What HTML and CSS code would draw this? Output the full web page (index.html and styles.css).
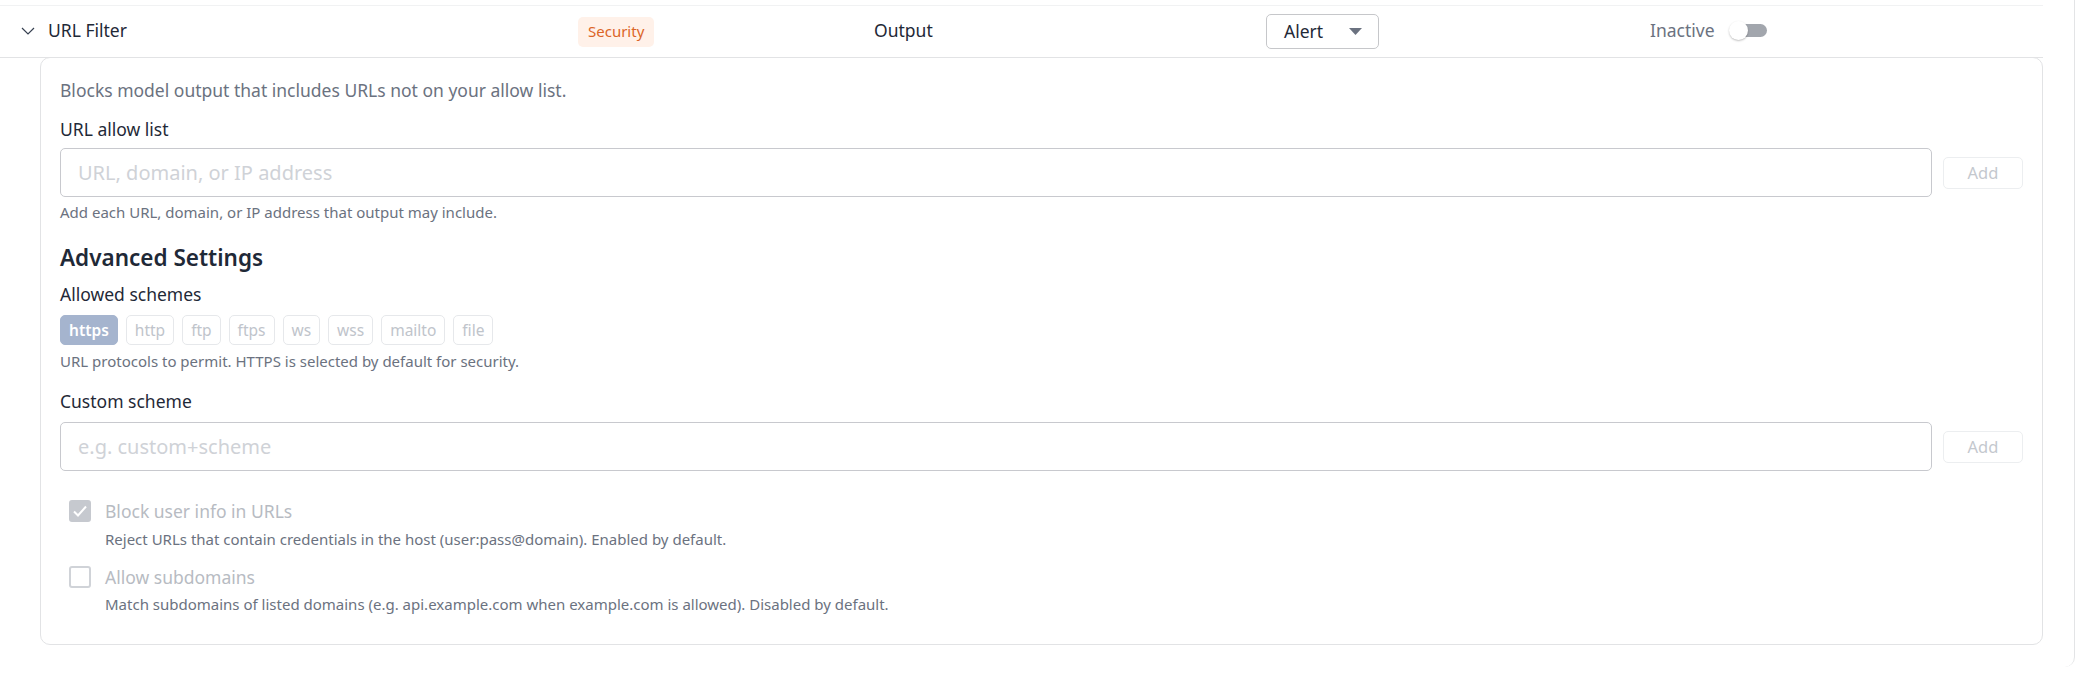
FILE: index.html
```html
<!DOCTYPE html>
<html lang="en">
<head>
<meta charset="utf-8">
<title>URL Filter</title>
<link rel="stylesheet" href="styles.css">
</head>
<body>
<div class="panel">
  <div class="rule-row">
    <div class="cell name">
      <svg class="chevron" width="14" height="8" viewBox="0 0 14 8"><polyline points="1,1 7,7 13,1" fill="none" stroke="#374151" stroke-width="1.2"/></svg>
      <span class="row-text">URL Filter</span>
    </div>
    <div class="cell"><span class="badge">Security</span></div>
    <div class="cell stage"><span class="row-text">Output</span></div>
    <div class="cell">
      <div class="select"><span class="row-text">Alert</span><svg width="13" height="7" viewBox="0 0 13 7"><polygon points="0,0 13,0 6.5,7" fill="#6b7280"/></svg></div>
    </div>
    <div class="cell status">
      <span class="status-text row-text">Inactive</span>
      <span class="toggle"><span class="knob"></span></span>
    </div>
  </div>
  <div class="card">
    <p class="desc">Blocks model output that includes URLs not on your allow list.</p>
    <div class="label first">URL allow list</div>
    <div class="field-row">
      <div class="input"><span class="placeholder">URL, domain, or IP address</span></div>
      <button class="add">Add</button>
    </div>
    <p class="help">Add each URL, domain, or IP address that output may include.</p>

    <h2 class="heading">Advanced Settings</h2>
    <div class="label">Allowed schemes</div>
    <div class="chips">
      <span class="chip on">https</span>
      <span class="chip">http</span>
      <span class="chip">ftp</span>
      <span class="chip">ftps</span>
      <span class="chip">ws</span>
      <span class="chip">wss</span>
      <span class="chip">mailto</span>
      <span class="chip">file</span>
    </div>
    <p class="help chips-help">URL protocols to permit. HTTPS is selected by default for security.</p>

    <div class="label custom">Custom scheme</div>
    <div class="field-row">
      <div class="input"><span class="placeholder">e.g. custom+scheme</span></div>
      <button class="add">Add</button>
    </div>

    <div class="check-group">
      <div class="check-row">
        <span class="box checked"><svg width="16" height="14" viewBox="0 0 16 14"><polyline points="2,7.5 6,11.5 14,2.5" fill="none" stroke="#ffffff" stroke-width="2"/></svg></span>
        <span class="check-label">Block user info in URLs</span>
      </div>
      <p class="check-help">Reject URLs that contain credentials in the host (user:pass@domain). Enabled by default.</p>
      <div class="check-row second">
        <span class="box"></span>
        <span class="check-label">Allow subdomains</span>
      </div>
      <p class="check-help">Match subdomains of listed domains (e.g. api.example.com when example.com is allowed). Disabled by default.</p>
    </div>
  </div>
</div>
</body>
</html>
```
FILE: styles.css
```css
* { box-sizing: border-box; }
html, body { margin: 0; padding: 0; background: #ffffff; }
body {
  font-family: "Noto Sans", "Open Sans", sans-serif;
  color: #1f2937;
  padding-top: 5px;
}
.panel {
  width: 2075px;
  padding-right: 31px;
  padding-bottom: 22px;
  margin-top: -5px;
  padding-top: 5px;
  border-right: 1px solid #e3e4e6;
  border-bottom-right-radius: 10px;
}
.rule-row {
  display: grid;
  grid-template-columns: 578px 296px 392px 384px 1fr;
  align-items: center;
  height: 53px;
  border-top: 1px solid #f1f2f3;
  border-bottom: 1px solid #e2e3e5;
  font-size: 17.5px;
}
.cell { display: flex; align-items: center; }
.row-text { padding-bottom: 3px; }
.name { padding-left: 21px; gap: 13px; color: #1f2937; }
.chevron { display: block; margin-bottom: 2px; }
.badge {
  display: inline-flex;
  align-items: center;
  height: 30px;
  padding: 0 10px 1px 10px;
  border-radius: 5px;
  background: #fff1e9;
  color: #dc6527;
  font-size: 15px;
}
.stage { color: #1f2937; }
.select {
  width: 113px;
  height: 35px;
  border: 1px solid #c6c7ca;
  border-radius: 5px;
  display: flex;
  align-items: center;
  justify-content: space-between;
  padding: 0 16px 0 17px;
  color: #1f2937;
  font-size: 17.5px;
}
.select .row-text { padding-bottom: 1px; }
.status { gap: 15px; }
.status-text { color: #6b7280; }
.toggle {
  position: relative;
  width: 33px;
  height: 13px;
  border-radius: 7px;
  background: #a2a6ad;
  margin-left: 4px;
  margin-bottom: 2px;
}
.knob {
  position: absolute;
  left: -5px;
  top: -3px;
  width: 19px;
  height: 19px;
  border-radius: 50%;
  background: #ffffff;
  box-shadow: 0 1px 2px rgba(0,0,0,0.25);
}
.card {
  margin-left: 40px;
  margin-top: -1px;
  border: 1px solid #e2e3e5;
  border-radius: 10px;
  padding: 20px 19px 30px 19px;
}
.desc {
  margin: 0;
  font-size: 17.5px;
  line-height: 24px;
  color: #6b7280;
}
.label {
  font-size: 17.5px;
  line-height: 24px;
  color: #1f2937;
  margin-top: 9px;
}
.label.first { margin-top: 15px; }
.label.custom { margin-top: 18px; }
.field-row {
  display: flex;
  align-items: center;
  gap: 11px;
  margin-top: 7px;
}
.label.custom + .field-row { margin-top: 9px; }
.input {
  flex: 1;
  height: 49px;
  border: 1px solid #c8c9ce;
  border-radius: 5px;
  display: flex;
  align-items: center;
  padding-left: 17px;
}
.placeholder {
  font-size: 20px;
  color: #cfd2d7;
}
.add {
  width: 80px;
  height: 32px;
  border: 1px solid #eceef0;
  border-radius: 5px;
  background: #ffffff;
  color: #c4c8ce;
  font-family: "Noto Sans", "Open Sans", sans-serif;
  font-size: 16.5px;
  padding: 0;
}
.help {
  margin: 5px 0 0 0;
  font-size: 15px;
  line-height: 20px;
  color: #6b7280;
}
.heading {
  margin: 21px 0 0 0;
  font-size: 22.5px;
  line-height: 30px;
  font-weight: 600;
  color: #1f2937;
}
.chips {
  display: flex;
  gap: 8px;
  margin-top: 9px;
}
.chip {
  height: 30px;
  display: inline-flex;
  align-items: center;
  padding: 0 8px 1px 8px;
  border: 1px solid #e6e8eb;
  border-radius: 5px;
  font-size: 15.5px;
  color: #c0c4cb;
}
.chip.on {
  background: #a5b4ce;
  border-color: #a5b4ce;
  color: #ffffff;
  font-weight: 600;
}
.help.chips-help { margin-top: 6px; }
.check-group {
  padding-left: 9px;
  margin-top: 29px;
}
.check-row {
  display: flex;
  align-items: center;
  gap: 14px;
  height: 22px;
}
.check-row.second { margin-top: 17px; }
.box {
  width: 22px;
  height: 22px;
  border-radius: 3px;
  border: 2px solid #d0d3d8;
  display: flex;
  align-items: center;
  justify-content: center;
}
.box.checked {
  background: #c6c9cf;
  border-color: #c6c9cf;
}
.check-label {
  font-size: 17.5px;
  color: #b7bbc2;
}
.check-help {
  margin: 7px 0 0 36px;
  font-size: 15px;
  line-height: 20px;
  color: #6b7280;
}
.check-row.second + .check-help { margin-top: 6px; }
```
